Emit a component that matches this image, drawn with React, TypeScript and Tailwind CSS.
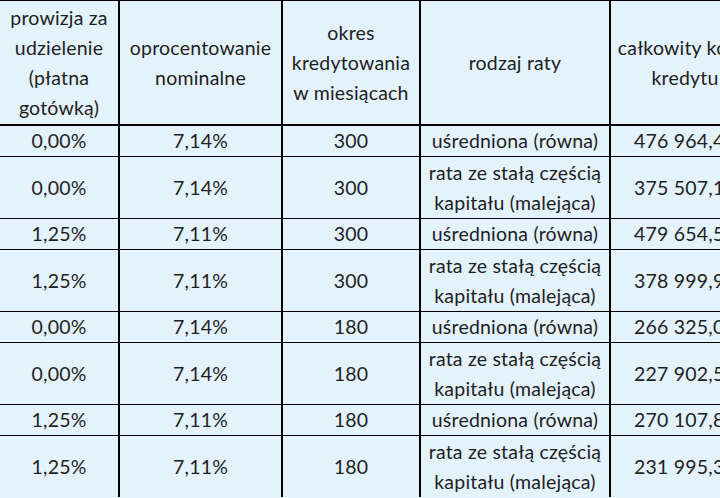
import React from "react";

const rows: [string, string, string, string[], string, boolean][] = [
  ["0,00%", "7,14%", "300", ["uśredniona (równa)"], "476 964,47", false],
  ["0,00%", "7,14%", "300", ["rata ze stałą częścią", "kapitału (malejąca)"], "375 507,12", true],
  ["1,25%", "7,11%", "300", ["uśredniona (równa)"], "479 654,53", false],
  ["1,25%", "7,11%", "300", ["rata ze stałą częścią", "kapitału (malejąca)"], "378 999,95", true],
  ["0,00%", "7,14%", "180", ["uśredniona (równa)"], "266 325,05", false],
  ["0,00%", "7,14%", "180", ["rata ze stałą częścią", "kapitału (malejąca)"], "227 902,50", true],
  ["1,25%", "7,11%", "180", ["uśredniona (równa)"], "270 107,81", false],
  ["1,25%", "7,11%", "180", ["rata ze stałą częścią", "kapitału (malejąca)"], "231 995,31", true],
];

function Cell({ children, tall }: { children: React.ReactNode; tall?: boolean }) {
  return (
    <div
      className={`bg-[#e4f2fc] flex flex-col items-center justify-center text-center whitespace-nowrap ${
        tall ? "h-[61px]" : "h-[30px]"
      }`}
    >
      {children}
    </div>
  );
}

function Head({ lines }: { lines: string[] }) {
  return (
    <div className="bg-[#e4f2fc] h-[124px] border-b border-black flex flex-col items-center justify-center text-center whitespace-nowrap">
      {lines.map((l, i) => (
        <div key={i}>{l}</div>
      ))}
    </div>
  );
}

export default function App() {
  return (
    <div className="w-[720px] h-[498px] overflow-hidden bg-[#e4f2fc]">
      <div
        className="w-[800px] bg-black pt-[1px] grid grid-cols-[118px_161px_136px_188px_148px] gap-x-[2px] gap-y-[1px] text-[19.5px] tracking-[0.2px] leading-[30px] text-[#1e1e1e]"
        style={{ fontFamily: "Lato, 'Noto Sans', sans-serif" }}
      >
        <Head lines={["prowizja za", "udzielenie", "(płatna", "gotówką)"]} />
        <Head lines={["oprocentowanie", "nominalne"]} />
        <Head lines={["okres", "kredytowania", "w miesiącach"]} />
        <Head lines={["rodzaj raty"]} />
        <Head lines={["całkowity koszt", "kredytu"]} />
        {rows.map((r, i) => (
          <React.Fragment key={i}>
            <Cell tall={r[5]}>{r[0]}</Cell>
            <Cell tall={r[5]}>{r[1]}</Cell>
            <Cell tall={r[5]}>{r[2]}</Cell>
            <Cell tall={r[5]}>
              {r[3].map((l, j) => (
                <div key={j}>{l}</div>
              ))}
            </Cell>
            <Cell tall={r[5]}>{r[4]}</Cell>
          </React.Fragment>
        ))}
      </div>
    </div>
  );
}
